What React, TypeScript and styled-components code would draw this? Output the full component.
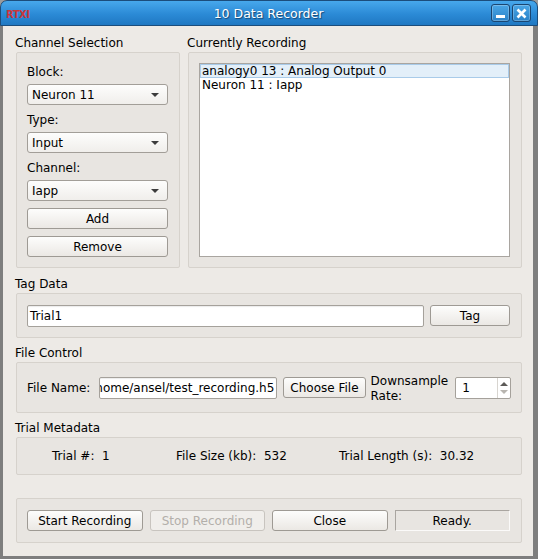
import React from "react";
import styled, { createGlobalStyle } from "styled-components";

const GlobalStyle = createGlobalStyle`
  html, body {
    margin: 0;
    padding: 0;
    background: #9b9b9b;
  }
  * {
    box-sizing: border-box;
  }
`;

const Frame = styled.div`
  width: 538px;
  height: 559px;
  display: flex;
  flex-direction: column;
  background: #7e7e7e;
  border-radius: 7px 7px 0 0;
  overflow: hidden;
  font-family: "DejaVu Sans", "Liberation Sans", sans-serif;
  font-size: 12px;
  color: #000;
`;

const TitleBar = styled.div`
  height: 26px;
  flex: none;
  display: grid;
  grid-template-columns: 80px 1fr 80px;
  align-items: center;
  padding: 0 6px 0 5px;
  background: linear-gradient(#47a8ec, #2b8ad6 55%, #1f78c2);
  border: 1px solid #1b4d7c;
  border-radius: 7px 7px 0 0;
`;

const Logo = styled.span`
  font-size: 10px;
  font-weight: bold;
  color: #c9363a;
  letter-spacing: -0.5px;
  padding-top: 2px;
`;

const Title = styled.span`
  text-align: center;
  color: #fff;
  font-size: 12.5px;
  text-shadow: 1px 1px 1px #174670;
`;

const TitleButtons = styled.div`
  display: flex;
  justify-content: flex-end;
  gap: 2px;
`;

const TitleButton = styled.div`
  width: 19px;
  height: 18px;
  border: 1px solid #1a4672;
  border-radius: 3px;
  background: linear-gradient(#4aa6e6, #2a82c8);
  box-shadow: inset 0 0 0 1px rgba(255, 255, 255, 0.25);
  display: flex;
  align-items: center;
  justify-content: center;
`;

const Body = styled.div`
  flex: 1;
  margin: 0 5px 3px 3px;
  background: #edeae6;
  padding: 8px 11px 0 13px;
  display: flex;
  flex-direction: column;
`;

const TopRow = styled.div`
  display: grid;
  grid-template-columns: 164px 1fr;
  column-gap: 8px;
`;

const Section = styled.div<{ $gap?: number }>`
  display: flex;
  flex-direction: column;
  margin-top: ${({ $gap }) => $gap ?? 0}px;
`;

const SectionTitle = styled.div`
  line-height: 18px;
  margin-left: -1px;
  white-space: nowrap;
`;

const Box = styled.div<{ $h: number }>`
  height: ${({ $h }) => $h}px;
  background: #e8e5e1;
  border: 1px solid #d6d2cc;
  border-radius: 2px;
`;

const ChannelBox = styled(Box)`
  padding: 10px 11px 0 10px;
  display: flex;
  flex-direction: column;
`;

const FieldLabel = styled.div<{ $top: number }>`
  line-height: 18px;
  margin-top: ${({ $top }) => $top}px;
  margin-bottom: 3px;
`;

const Combo = styled.div`
  height: 21px;
  display: flex;
  align-items: center;
  justify-content: space-between;
  padding: 0 8px 0 4px;
  background: linear-gradient(#fdfdfc, #f0eeeb);
  border: 1px solid #a29e98;
  border-radius: 3px;
`;

const Arrow = styled.span`
  width: 0;
  height: 0;
  border-left: 4px solid transparent;
  border-right: 4px solid transparent;
  border-top: 4px solid #3c3c3c;
`;

const PushButton = styled.button<{ $top?: number; $disabled?: boolean }>`
  height: 21px;
  margin-top: ${({ $top }) => $top ?? 0}px;
  padding: 0 6px;
  font-family: "DejaVu Sans", "Liberation Sans", sans-serif;
  font-size: 12px;
  color: ${({ $disabled }) => ($disabled ? "#b3afaa" : "#000")};
  background: ${({ $disabled }) =>
    $disabled ? "#f0eeeb" : "linear-gradient(#fdfdfc, #ebe8e4)"};
  border: 1px solid ${({ $disabled }) => ($disabled ? "#c8c4bf" : "#9e9a94")};
  border-radius: 3px;
  white-space: nowrap;
`;

const ListBox = styled(Box)`
  padding: 10px 11px 10px 10px;
`;

const List = styled.div`
  height: 100%;
  background: #fff;
  border: 1px solid #a9a5a0;
`;

const ListItem = styled.div<{ $selected?: boolean }>`
  height: 14px;
  line-height: 14px;
  padding-left: 2px;
  white-space: nowrap;
  background: ${({ $selected }) => ($selected ? "#e3eff9" : "transparent")};
  box-shadow: ${({ $selected }) =>
    $selected ? "inset 0 0 0 1px #a9cbe9" : "none"};
`;

const RowBox = styled(Box)`
  display: flex;
  align-items: center;
  padding: 0 11px 0 10px;
  gap: 6px;
`;

const TextInput = styled.div<{ $w?: number }>`
  height: 22px;
  ${({ $w }) => ($w ? `width: ${$w}px; flex: none;` : "flex: 1;")}
  background: #fff;
  border: 1px solid #a5a19b;
  border-radius: 2px;
  box-shadow: inset 0 1px 1px rgba(0, 0, 0, 0.08);
  display: flex;
  align-items: center;
  padding: 0 2px;
  overflow: hidden;
  white-space: nowrap;
`;

const ScrolledInput = styled(TextInput)`
  justify-content: flex-end;
`;

const Label = styled.span<{ $gap?: number }>`
  white-space: nowrap;
  margin-right: ${({ $gap }) => $gap ?? 0}px;
`;

const TwoLine = styled.span`
  line-height: 15px;
  width: 80px;
  margin-top: 2px;
  margin-left: -1px;
`;

const Spin = styled.div`
  width: 56px;
  height: 22px;
  flex: none;
  margin-left: 1px;
  background: #fff;
  border: 1px solid #a5a19b;
  border-radius: 2px;
  display: flex;
  align-items: center;
  padding-left: 6px;
`;

const SpinValue = styled.span`
  flex: 1;
`;

const SpinArrows = styled.div`
  width: 13px;
  height: 100%;
  border-left: 1px solid #d8d5d0;
  display: flex;
  flex-direction: column;
  align-items: center;
  justify-content: center;
  gap: 4px;
`;

const SpinArrow = styled.span<{ $up?: boolean; $dim?: boolean }>`
  width: 0;
  height: 0;
  border-left: 4px solid transparent;
  border-right: 4px solid transparent;
  ${({ $up, $dim }) =>
    $up
      ? `border-bottom: 4px solid ${$dim ? "#b8b5b0" : "#5c5a57"};`
      : `border-top: 4px solid ${$dim ? "#b8b5b0" : "#5c5a57"};`}
`;

const MetaBox = styled(Box)`
  display: grid;
  grid-template-columns: 124px 163px auto;
  align-items: center;
  padding-left: 35px;
`;

const MetaItem = styled.span`
  white-space: nowrap;
`;

const ButtonBar = styled(Box)`
  margin-top: 23px;
  display: grid;
  grid-template-columns: repeat(4, 1fr);
  column-gap: 7px;
  align-items: center;
  padding: 0 11px 0 10px;
`;

const Status = styled.div`
  height: 21px;
  display: flex;
  align-items: center;
  justify-content: center;
  border: 1px solid;
  border-color: #a9a5a0 #fbfaf9 #fbfaf9 #a9a5a0;
`;

const App = () => {
  return (
    <>
      <GlobalStyle />
      <Frame>
        <TitleBar>
          <Logo>RTXI</Logo>
          <Title>10 Data Recorder</Title>
          <TitleButtons>
            <TitleButton>
              <svg width="11" height="11" viewBox="0 0 11 11">
                <rect x="1" y="7" width="9" height="3" fill="#fff" />
              </svg>
            </TitleButton>
            <TitleButton>
              <svg width="11" height="11" viewBox="0 0 11 11">
                <path
                  d="M1.5 1.5 L9.5 9.5 M9.5 1.5 L1.5 9.5"
                  stroke="#fff"
                  strokeWidth="2.6"
                />
              </svg>
            </TitleButton>
          </TitleButtons>
        </TitleBar>
        <Body>
          <TopRow>
            <Section>
              <SectionTitle>Channel Selection</SectionTitle>
              <ChannelBox $h={216}>
                <FieldLabel $top={0}>Block:</FieldLabel>
                <Combo>
                  Neuron 11
                  <Arrow />
                </Combo>
                <FieldLabel $top={6}>Type:</FieldLabel>
                <Combo>
                  Input
                  <Arrow />
                </Combo>
                <FieldLabel $top={6}>Channel:</FieldLabel>
                <Combo>
                  Iapp
                  <Arrow />
                </Combo>
                <PushButton $top={7}>Add</PushButton>
                <PushButton $top={7}>Remove</PushButton>
              </ChannelBox>
            </Section>
            <Section>
              <SectionTitle>Currently Recording</SectionTitle>
              <ListBox $h={216}>
                <List>
                  <ListItem $selected>analogy0 13 : Analog Output 0</ListItem>
                  <ListItem>Neuron 11 : Iapp</ListItem>
                </List>
              </ListBox>
            </Section>
          </TopRow>

          <Section $gap={7}>
            <SectionTitle>Tag Data</SectionTitle>
            <RowBox $h={45}>
              <TextInput>Trial1</TextInput>
              <PushButton style={{ width: 80 }}>Tag</PushButton>
            </RowBox>
          </Section>

          <Section $gap={6}>
            <SectionTitle>File Control</SectionTitle>
            <RowBox $h={51}>
              <Label $gap={3}>File Name:</Label>
              <ScrolledInput $w={178}>/home/ansel/test_recording.h5</ScrolledInput>
              <PushButton style={{ flex: "none" }}>Choose File</PushButton>
              <TwoLine>
                Downsample
                <br />
                Rate:
              </TwoLine>
              <Spin>
                <SpinValue>1</SpinValue>
                <SpinArrows>
                  <SpinArrow $up />
                  <SpinArrow $dim />
                </SpinArrows>
              </Spin>
            </RowBox>
          </Section>

          <Section $gap={6}>
            <SectionTitle>Trial Metadata</SectionTitle>
            <MetaBox $h={38}>
              <MetaItem>Trial #:&nbsp; 1</MetaItem>
              <MetaItem>File Size (kb):&nbsp; 532</MetaItem>
              <MetaItem>Trial Length (s):&nbsp; 30.32</MetaItem>
            </MetaBox>
          </Section>

          <ButtonBar $h={45}>
            <PushButton>Start Recording</PushButton>
            <PushButton $disabled>Stop Recording</PushButton>
            <PushButton>Close</PushButton>
            <Status>Ready.</Status>
          </ButtonBar>
        </Body>
      </Frame>
    </>
  );
};

export default App;
